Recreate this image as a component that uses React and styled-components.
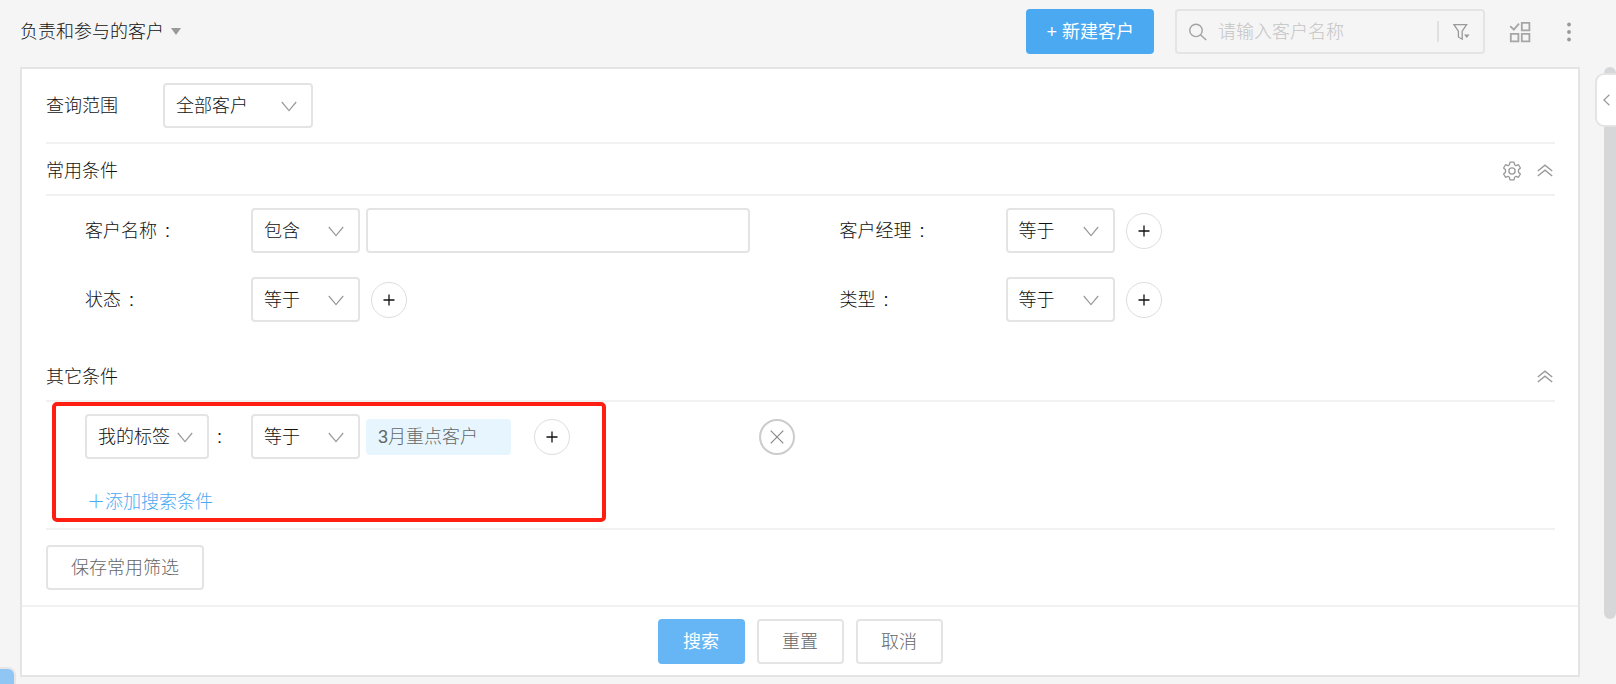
import React from 'react';
import styled, { createGlobalStyle, css } from 'styled-components';

const GlobalStyle = createGlobalStyle`
  *, *::before, *::after { box-sizing: border-box; }
  body {
    margin: 0;
    background: #f5f5f5;
    color: #111;
    font: 300 18px/24px "Liberation Sans", "Noto Sans CJK SC", sans-serif;
  }
  button, input, select { font: inherit; color: inherit; margin: 0; }
  button { padding: 0; cursor: pointer; }
`;

const Page = styled.div`
  display: flex;
  gap: 15px;
  min-height: 100vh;
  padding-left: 20px;
`;

const Main = styled.main`
  flex: 1;
  min-width: 0;
`;

const Header = styled.header`
  display: flex;
  align-items: center;
  padding: 9px 0 13px;
`;

const ViewSwitch = styled.button`
  display: flex;
  align-items: center;
  gap: 7px;
  margin-right: auto;
  border: 0;
  background: none;
`;

const Caret = styled.span`
  border: 5px solid transparent;
  border-top: 7px solid #999;
  border-bottom: 0;
`;

const buttonColors = {
  create: css`background: #4ba9f2; border-color: #4ba9f2; color: #fff; font-weight: 400;`,
  primary: css`background: #66b5f4; border-color: #66b5f4; color: #fff; font-weight: 400;`,
  plain: css`background: #fff; border-color: #e4e4e4; color: #666;`,
};

const Button = styled.button`
  height: 45px;
  min-width: 87px;
  padding: 0 ${(p) => (p.$kind === 'create' ? 18 : 23)}px;
  border: 2px solid;
  border-radius: 4px;
  white-space: nowrap;
  ${(p) => buttonColors[p.$kind || 'plain']}
`;

const SearchBox = styled.div`
  display: flex;
  align-items: center;
  width: 310px;
  height: 45px;
  margin: 0 24px 0 21px;
  padding: 0 12px;
  border: 2px solid #e4e4e4;
  border-radius: 4px;
  color: #a3a3a3;
`;

const SearchInput = styled.input`
  flex: 1;
  min-width: 0;
  padding: 0 0 0 11px;
  border: 0;
  outline: 0;
  background: none;
  &::placeholder { color: #c4c4c4; opacity: 1; }
`;

const Divider = styled.span`
  width: 2px;
  height: 21px;
  margin-right: 12px;
  background: #e0e0e0;
`;

const IconButton = styled.button`
  display: flex;
  align-items: center;
  justify-content: center;
  min-width: 20px;
  height: 24px;
  border: 0;
  background: none;
  color: #999;
`;

const HeaderTools = styled.div`
  display: flex;
  gap: 28px;
  padding-right: 1px;
`;

const Panel = styled.form`
  position: relative;
  border: 2px solid #e4e4e4;
  background: #fff;
`;

const PanelBody = styled.div`
  padding: 0 23px 0 24px;
`;

const ScopeRow = styled.div`
  display: flex;
  align-items: center;
  padding: 14px 0;
  border-bottom: 2px solid #f1f1f1;
`;

const ScopeLabel = styled.label`
  width: 117px;
`;

const SectionHead = styled.div`
  display: flex;
  align-items: center;
  gap: 13px;
  height: 52px;
  padding-top: 3px;
  border-bottom: 2px solid #f1f1f1;
`;

const SectionTitle = styled.h2`
  flex: 1;
  margin: 0;
  font: inherit;
`;

const Conditions = styled.div`
  display: grid;
  grid-template-columns: 1fr 1fr;
  row-gap: 24px;
  padding: 12px 0 28px;
`;

const Condition = styled.div`
  display: flex;
  align-items: center;
  gap: 6px;
  padding: 0 6px 0 39px;
`;

const FieldName = styled.div`
  display: flex;
  align-items: center;
  gap: 8px;
  width: 160px;
`;

const SelectWrap = styled.span`
  position: relative;
  display: inline-block;
  width: ${(p) => p.$width}px;
`;

const SelectControl = styled.select`
  appearance: none;
  display: block;
  width: 100%;
  height: 45px;
  padding: 0 0 0 11px;
  border: 2px solid #e4e4e4;
  border-radius: 4px;
  background: #fff;
`;

const SelectArrow = styled.svg`
  position: absolute;
  top: 18px;
  right: 16px;
  pointer-events: none;
`;

const TextInput = styled.input`
  flex: 1;
  min-width: 0;
  height: 45px;
  margin-right: 45px;
  padding: 0 11px;
  border: 2px solid #e4e4e4;
  border-radius: 4px;
  background: #fff;
`;

const RoundButton = styled.button`
  display: flex;
  align-items: center;
  justify-content: center;
  width: 36px;
  height: 36px;
  border: ${(p) => (p.$remove ? '2px solid #ccc' : '1px solid #ddd')};
  border-radius: 50%;
  background: #fff;
  color: ${(p) => (p.$remove ? '#888' : '#111')};
  margin-left: ${(p) => (p.$remove ? 'auto' : p.$afterTag ? '17px' : '5px')};
`;

const Tag = styled.span`
  width: 145px;
  height: 36px;
  padding: 0 12px;
  border-radius: 4px;
  background: #e7f6fe;
  color: #666;
  line-height: 36px;
`;

const AddLinkRow = styled.div`
  padding: 3px 0 14px 41px;
`;

const AddLink = styled.a`
  color: #4ba9f2;
  text-decoration: none;
`;

const SaveRow = styled.div`
  padding: 15px 0;
  border-top: 2px solid #f1f1f1;
`;

const Footer = styled.footer`
  display: flex;
  justify-content: center;
  gap: 12px;
  padding: 12px 0 11px;
  border-top: 2px solid #f1f1f1;
`;

const Highlight = styled.div`
  position: absolute;
  top: 333px;
  left: 30px;
  width: 554px;
  height: 120px;
  border: 4px solid #ff1e12;
  border-radius: 5px;
  pointer-events: none;
`;

const Rail = styled.aside`
  position: relative;
  width: 21px;
  padding: 67px 0 65px 9px;
`;

const ScrollThumb = styled.div`
  height: 100%;
  border-radius: 6px;
  background: #d6d7d9;
`;

const DrawerTab = styled.button`
  position: absolute;
  top: 73px;
  right: 0;
  display: flex;
  align-items: center;
  justify-content: center;
  width: 21px;
  height: 54px;
  border: 2px solid #e4e4e4;
  border-right: 0;
  border-radius: 9px 0 0 9px;
  background: #fff;
  color: #999;
`;

const CornerTab = styled.div`
  position: fixed;
  left: 0;
  bottom: 0;
  width: 14px;
  height: 15px;
  border-radius: 0 6px 0 0;
  background: #8fc6f4;
  box-shadow: 0 0 0 2px #e6e6e6;
`;

const stroke = { fill: 'none', stroke: 'currentColor' };

const SearchIcon = () => (
  <svg width="18" height="18" viewBox="0 0 18 18" {...stroke} strokeWidth="1.4">
    <circle cx="7" cy="7.4" r="6.2" />
    <path d="m11.4 11.8 5.8 5.2" />
  </svg>
);

const FilterIcon = () => (
  <svg width="17" height="18" viewBox="0 0 17 18" {...stroke} strokeWidth="1.3">
    <path d="M1 1.7h12.6L9.2 8.2v8L5.4 14V8.2z" />
    <path d="M11 11.5h5.6l-2.8 3.4z" fill="currentColor" stroke="none" />
  </svg>
);

const BatchIcon = () => (
  <svg width="22" height="22" viewBox="0 0 22 22" fill="none" stroke="#a6a6a6" strokeWidth="1.8">
    <path d="M1.2 5.2 4.8 8.6 10 2.6" />
    <path d="M12.8 1.8h7.6v7.6h-7.6zM1.8 12.8h7.6v7.6H1.8zM12.8 12.8h7.6v7.6h-7.6z" />
  </svg>
);

const MoreIcon = () => (
  <svg width="4" height="20" viewBox="0 0 4 20" fill="currentColor">
    <circle cx="2" cy="2.5" r="1.9" />
    <circle cx="2" cy="10" r="1.9" />
    <circle cx="2" cy="17.5" r="1.9" />
  </svg>
);

const GearIcon = () => (
  <svg width="18" height="20" viewBox="0 0 18 20" {...stroke} strokeWidth="1.3" strokeLinejoin="round">
    <path d="M7 1.2h4l.6 2.6 1.5.9 2.4-1 1.9 3.3-1.9 1.7v2.6l1.9 1.7-1.9 3.3-2.4-1-1.5.9-.6 2.6H7l-.6-2.6-1.5-.9-2.4 1L.6 13l1.9-1.7V8.7L.6 7l1.9-3.3 2.4 1 1.5-.9z" />
    <circle cx="9" cy="10" r="3.1" />
  </svg>
);

const CollapseIcon = () => (
  <svg width="16" height="13" viewBox="0 0 16 13" {...stroke} strokeWidth="1.4">
    <path d="M.8 7 8 1.2 15.2 7M.8 12 8 6.2l7.2 5.8" />
  </svg>
);

const PlusIcon = () => (
  <svg width="12" height="12" viewBox="0 0 12 12" {...stroke} strokeWidth="1.3">
    <path d="M6 .5v11M.5 6h11" />
  </svg>
);

const CrossIcon = () => (
  <svg width="14" height="14" viewBox="0 0 14 14" {...stroke} strokeWidth="1.2">
    <path d="m.7.7 12.6 12.6M13.3.7.7 13.3" />
  </svg>
);

const LeftIcon = () => (
  <svg width="7" height="12" viewBox="0 0 7 12" {...stroke} strokeWidth="1.2">
    <path d="M6.4.8.9 6l5.5 5.2" />
  </svg>
);

function Select({ id, label, value, width = 109 }) {
  return (
    <SelectWrap $width={width}>
      <SelectControl id={id} aria-label={label} defaultValue={value}>
        <option>{value}</option>
      </SelectControl>
      <SelectArrow width="16" height="11" viewBox="0 0 16 11" fill="none" stroke="#999" strokeWidth="1.2">
        <path d="M.8 1 8 9.6 15.2 1" />
      </SelectArrow>
    </SelectWrap>
  );
}

function AddButton({ label, afterTag }) {
  return (
    <RoundButton type="button" aria-label={label} $afterTag={afterTag}>
      <PlusIcon />
    </RoundButton>
  );
}

function Field({ id, name, operator, text }) {
  return (
    <Condition>
      <FieldName>
        <label htmlFor={id}>{name}</label>
        <span>:</span>
      </FieldName>
      <Select id={id} value={operator} />
      {text ? <TextInput type="text" aria-label={name} /> : <AddButton label={name} />}
    </Condition>
  );
}

export default function App() {
  return (
    <>
      <GlobalStyle />
      <Page>
        <Main>
          <Header>
            <ViewSwitch type="button">
              负责和参与的客户
              <Caret />
            </ViewSwitch>
            <Button type="button" $kind="create">+ 新建客户</Button>
            <SearchBox>
              <SearchIcon />
              <SearchInput type="text" aria-label="客户名称" placeholder="请输入客户名称" />
              <Divider />
              <IconButton type="button" aria-label="筛选"><FilterIcon /></IconButton>
            </SearchBox>
            <HeaderTools>
              <IconButton type="button" aria-label="批量操作"><BatchIcon /></IconButton>
              <IconButton type="button" aria-label="更多"><MoreIcon /></IconButton>
            </HeaderTools>
          </Header>

          <Panel onSubmit={(e) => e.preventDefault()}>
            <PanelBody>
              <ScopeRow>
                <ScopeLabel htmlFor="scope">查询范围</ScopeLabel>
                <Select id="scope" value="全部客户" width={150} />
              </ScopeRow>

              <SectionHead>
                <SectionTitle>常用条件</SectionTitle>
                <IconButton type="button" aria-label="设置"><GearIcon /></IconButton>
                <IconButton type="button" aria-label="收起常用条件"><CollapseIcon /></IconButton>
              </SectionHead>
              <Conditions>
                <Field id="name" name="客户名称" operator="包含" text />
                <Field id="manager" name="客户经理" operator="等于" />
                <Field id="status" name="状态" operator="等于" />
                <Field id="type" name="类型" operator="等于" />
              </Conditions>

              <SectionHead>
                <SectionTitle>其它条件</SectionTitle>
                <IconButton type="button" aria-label="收起其它条件"><CollapseIcon /></IconButton>
              </SectionHead>
              <Conditions>
                <Condition>
                  <FieldName>
                    <Select label="条件" value="我的标签" width={124} />
                    <span>:</span>
                  </FieldName>
                  <Select label="运算符" value="等于" />
                  <Tag>3月重点客户</Tag>
                  <AddButton label="添加标签" afterTag />
                  <RoundButton type="button" aria-label="移除条件" $remove><CrossIcon /></RoundButton>
                </Condition>
              </Conditions>
              <AddLinkRow>
                <AddLink href="#add">＋添加搜索条件</AddLink>
              </AddLinkRow>

              <SaveRow>
                <Button type="button">保存常用筛选</Button>
              </SaveRow>
            </PanelBody>
            <Footer>
              <Button type="submit" $kind="primary">搜索</Button>
              <Button type="reset">重置</Button>
              <Button type="button">取消</Button>
            </Footer>
            <Highlight />
          </Panel>
        </Main>
        <Rail>
          <ScrollThumb />
          <DrawerTab type="button" aria-label="展开侧栏"><LeftIcon /></DrawerTab>
        </Rail>
      </Page>
      <CornerTab />
    </>
  );
}
